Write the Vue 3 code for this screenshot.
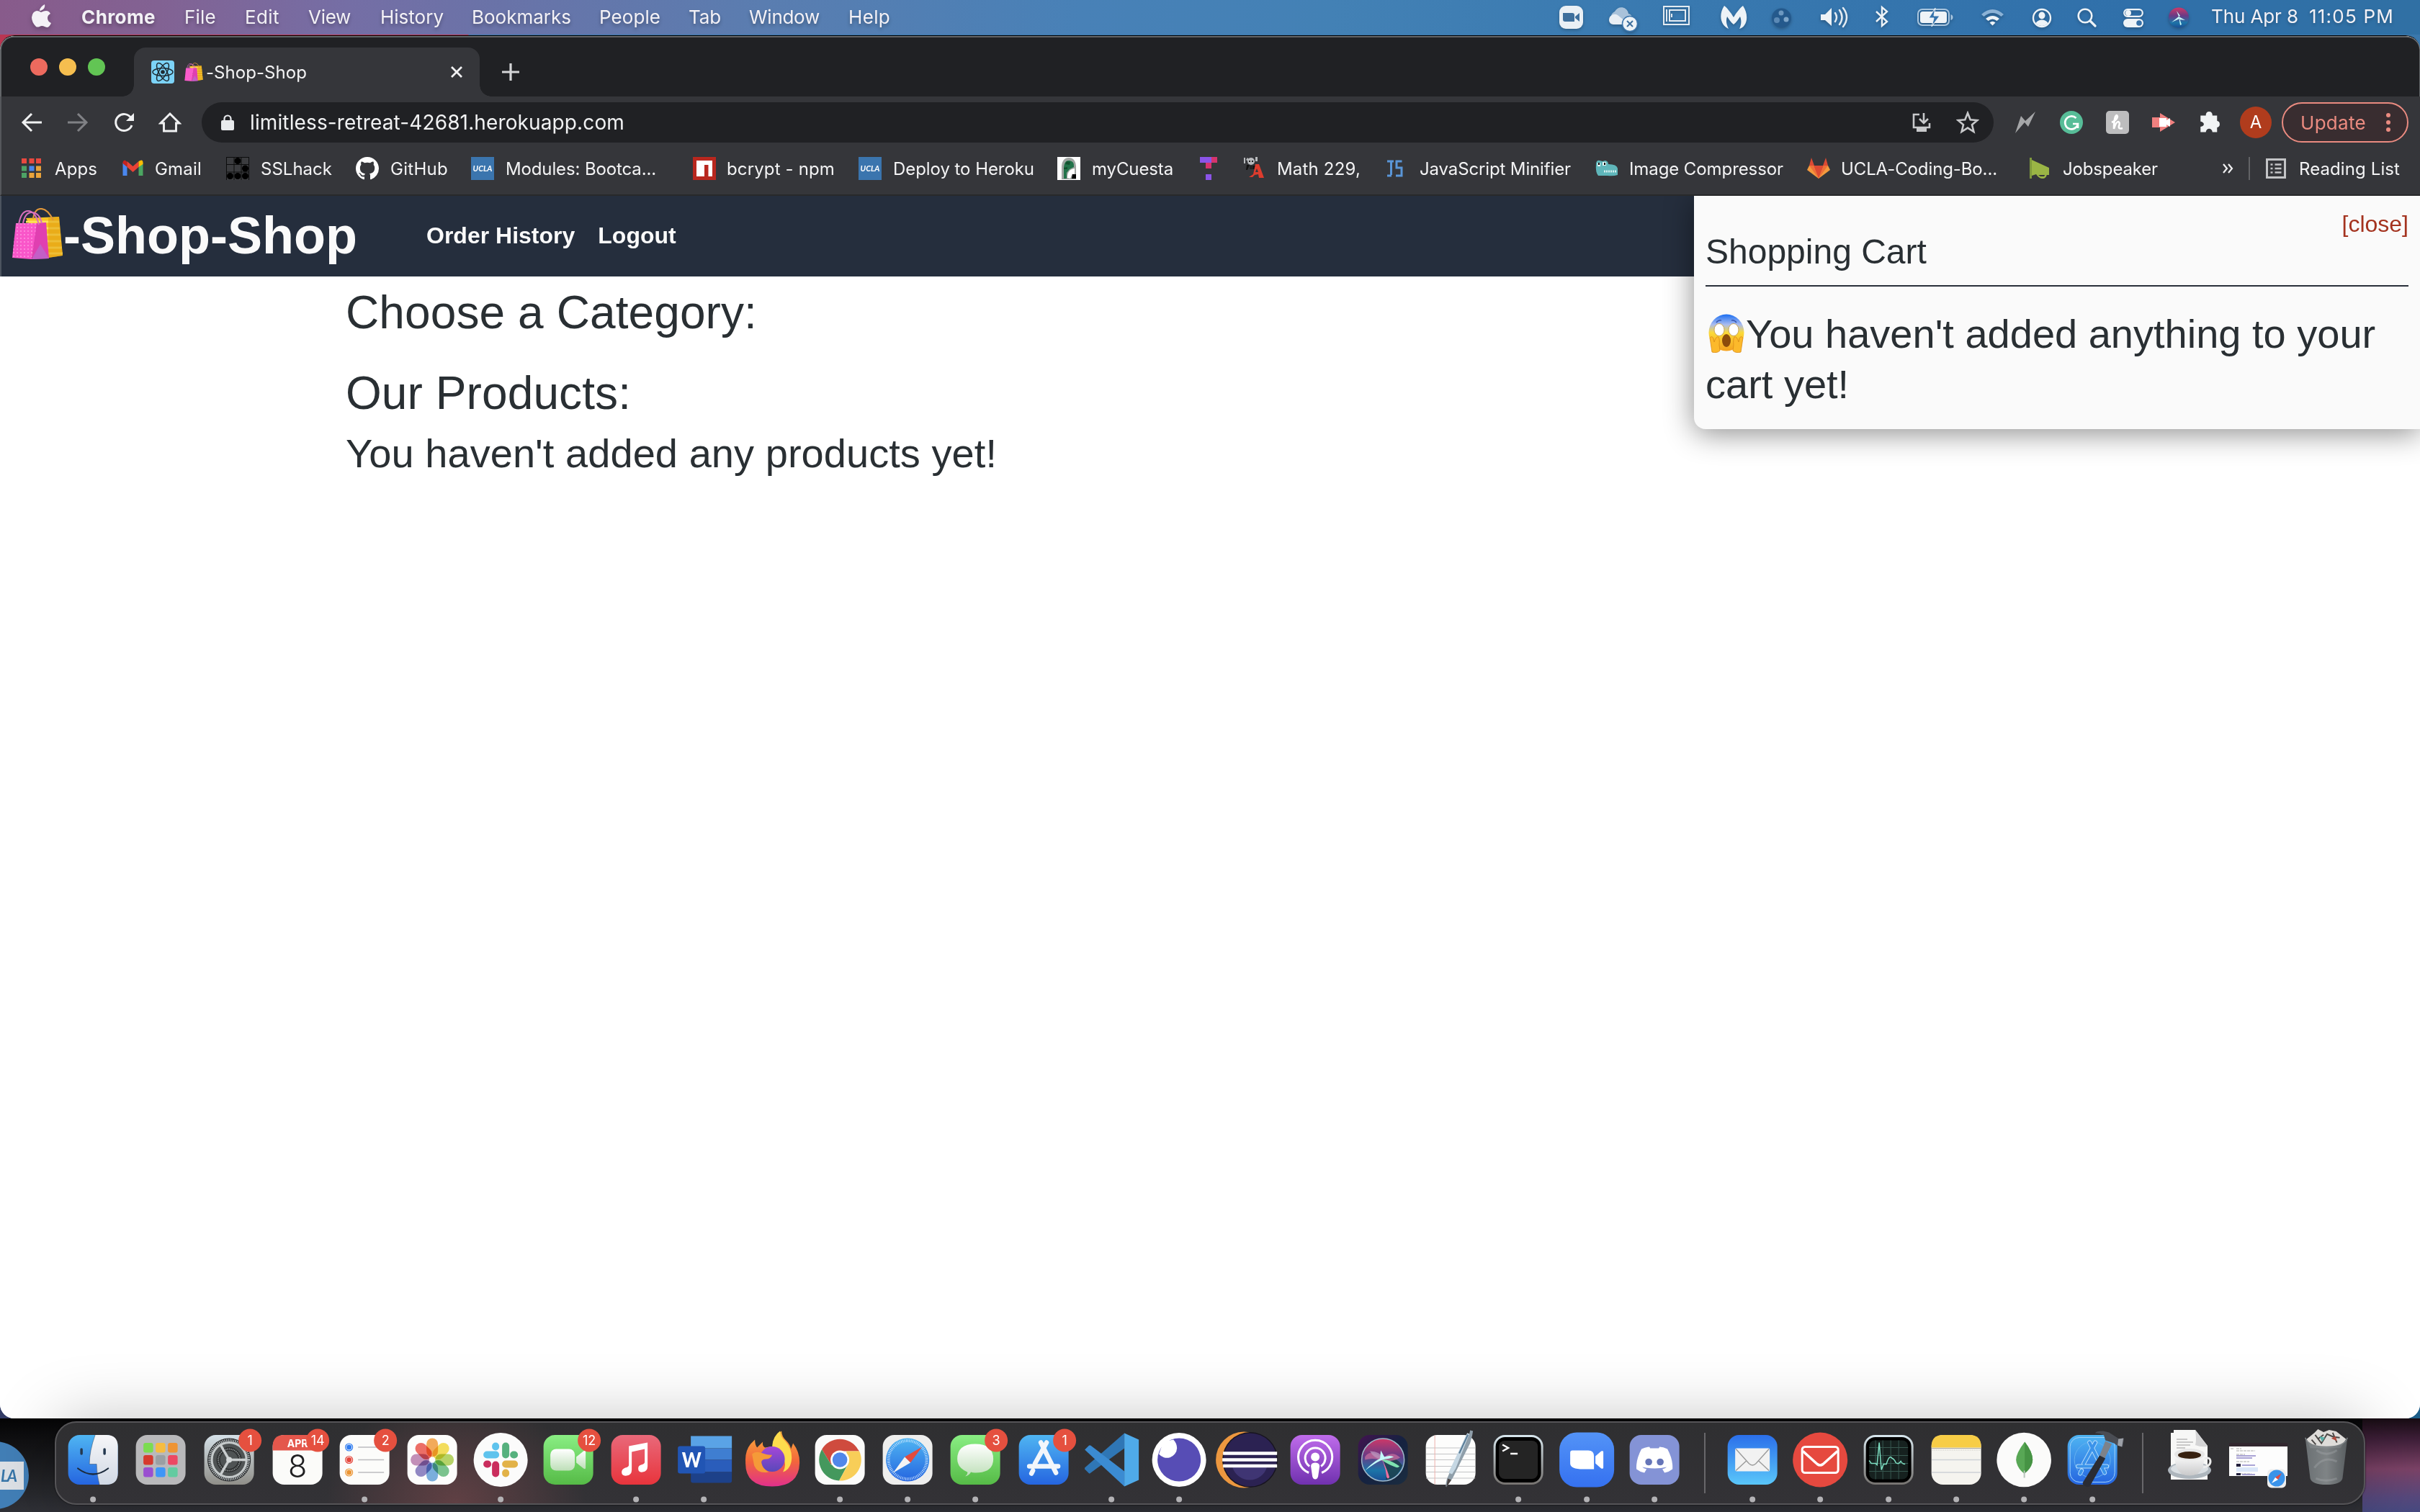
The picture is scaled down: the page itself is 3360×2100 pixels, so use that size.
<script setup>
// Spreads a label over a given width, in pixels, by adjusting its tracking.
const vFit = {
  mounted(el, { value }) {
    const natural = el.getBoundingClientRect().width
    el.style.letterSpacing = (value - natural) / el.textContent.length + 'px'
  }
}

const menus = [
  { label: 'Chrome', text: 103, cell: 143, strong: true },
  { label: 'File', text: 44, cell: 84 },
  { label: 'Edit', text: 48, cell: 88 },
  { label: 'View', text: 59, cell: 100 },
  { label: 'History', text: 88, cell: 127 },
  { label: 'Bookmarks', text: 138, cell: 177 },
  { label: 'People', text: 85, cell: 124 },
  { label: 'Tab', text: 45, cell: 84 },
  { label: 'Window', text: 98, cell: 138 },
  { label: 'Help', text: 58, cell: 98 }
]

const ucla = '<rect width="32" height="32" fill="#3b75ae"/><text x="16" y="20" text-anchor="middle" font-family="Lato,sans-serif" font-weight="700" font-size="11" fill="#fff" textLength="27" font-style="italic">UCLA</text>'

const statusIcons = [
  { w: 34, gap: 35, art: '<rect x="0" y="0" width="33" height="32" rx="9" fill="#eaf0f5"/><path d="M5 10h13a3 3 0 0 1 3 3v9H8a3 3 0 0 1-3-3zM22 15l6-5v12l-6-5z" fill="#3e6f9c"/>' },
  { w: 42, gap: 33, art: '<path d="M10 25a9 9 0 0 1-2-17 10 10 0 0 1 19 3 8 8 0 0 1 3 14z" fill="#a9c2da"/><path d="M0 20a8 8 0 0 1 12-7l10 8-3 5H6a6 6 0 0 1-6-6z" fill="#e8eef4"/><circle cx="29" cy="25" r="10.500" fill="#eef3f7" stroke="#3c76ad" stroke-width="1.500"/><path d="M25 21l8 8m0-8l-8 8" stroke="#3d6f9e" stroke-width="2"/>' },
  { w: 37, gap: 42, art: '<path d="M1 1h35v25H1z" fill="none" stroke="#e3ebf2" stroke-width="2"/><path d="M9 6h22v15H9zM5 5v17M12 11v5" fill="none" stroke="#e3ebf2" stroke-width="2"/>' },
  { w: 38, gap: 34, art: '<path d="M6 0c3 2 9 9 13 16C23 9 29 2 32 0c6 9 7 20 2 27-2 3-4 4-7 5 3-6 3-12 1-17-2 3-5 8-9 11-4-3-7-8-9-11-2 6-1 11 2 17C2 28-3 14 6 0z" fill="#eef3f7"/>' },
  { w: 27, gap: 41, art: '<circle cx="13.500" cy="17" r="13.500" fill="#24598c"/><circle cx="13" cy="10" r="3.500" fill="#6c97bf"/><circle cx="7" cy="20" r="4" fill="#5b89b5"/><circle cx="20" cy="19" r="3.500" fill="#7da5c9"/>' },
  { w: 38, gap: 38, art: '<path d="M0 12h6l9-9v25l-9-8H0z" fill="#eef3f7"/><path d="M20 10q4 6 0 12M26 6q7 10 0 20M31 3q10 13 0 26" stroke="#e4ecf3" stroke-width="2.500" fill="none" stroke-linecap="round"/>' },
  { w: 18, gap: 40, art: '<path d="M1 8l15 14-7 6V2l7 6L1 22" fill="none" stroke="#eef3f7" stroke-width="2.400"/>' },
  { w: 50, gap: 38, art: '<rect x="1" y="5" width="43" height="22" rx="6" fill="none" stroke="#a9c6df" stroke-width="2"/><rect x="4" y="8" width="37" height="16" rx="3.500" fill="#eef3f7"/><path d="M46.500 12v8q3-1 3-4t-3-4z" fill="#a9c6df"/><path d="M25 3L16 17h7l-3 12 11-15h-8z" fill="#3573ac" stroke="#eef3f7" stroke-width="1"/>' },
  { w: 33, gap: 38, art: '<path d="M1 12q15.500-14 31 0l-3.500 3q-12-10-24 0z" fill="#8bb2d6"/><path d="M7 18q9.500-8 19 0l-3.500 3q-6-5-12 0z" fill="#eef3f7"/><path d="M12.500 23.500q4-3.500 8 0l-4 4z" fill="#eef3f7"/>' },
  { w: 28, gap: 35, art: '<circle cx="14" cy="17" r="12" fill="none" stroke="#eef3f7" stroke-width="2.400"/><ellipse cx="14" cy="13.500" rx="4.500" ry="5" fill="#eef3f7"/><path d="M5.500 24q3-4.500 8.500-4.500t8.500 4.500q-3 4-8.500 4t-8.500-4z" fill="#eef3f7"/>' },
  { w: 27, gap: 37, art: '<circle cx="11" cy="14" r="9.300" fill="none" stroke="#eef3f7" stroke-width="2.600"/><path d="M18 21l7 7" stroke="#eef3f7" stroke-width="3.200" stroke-linecap="round"/>' },
  { w: 28, gap: 35, art: '<rect x="1.200" y="5.200" width="25.600" height="9.600" rx="4.800" fill="none" stroke="#eef3f7" stroke-width="2.200"/><circle cx="7" cy="10" r="4" fill="#eef3f7"/><rect y="18" width="28" height="12" rx="6" fill="#eef3f7"/><circle cx="22" cy="24" r="3.800" fill="#3570a8"/>' },
  { w: 28, gap: 31, art: '<circle cx="14" cy="16.500" r="14" fill="url(#siri)"/><g fill="#c9fbfa"><path d="M14 15L4 23l11-5zM14 15l9 5-8-1zM14 15l-3-8 5 7zM14 15l2 12 2-1z"/></g>' }
]

const bookmarks = [
  { cell: 139, pad: 16, text: 59, label: 'Apps', art: '<g fill="#e8493f"><path d="M2 2h7v7H2zM12.500 2h7v7h-7zM22 2h7v7h-7z"/></g><path d="M2 12.500h7v7H2zM2 22h7v7H2z" fill="#4da265"/><path d="M12.500 12.500h7v7h-7z" fill="#4a87ee"/><path d="M22 12.500h7v7h-7zM12.500 22h7v7h-7zM22 22h7v7h-7z" fill="#e9a33b"/>' },
  { cell: 147, pad: 16, text: 65, label: 'Gmail', art: '<g transform="translate(1.500 0)"><path d="M2 8v18h6V13z" fill="#4a87ee"/><path d="M24 13v13h6V8z" fill="#4ba661"/><path d="M2 8q0-3 3-3.500L8 7v7L2 9z" fill="#c5221f"/><path d="M8 6l8 7 8-7v8l-8 7-8-7z" fill="#e94235"/><path d="M24 6q6-4 6 2v2l-6 4z" fill="#fbbc04"/></g>' },
  { cell: 180, pad: 16, text: 99, label: 'SSLhack', art: '<rect width="32" height="32" fill="#3b3c3f"/><path d="M0 .5h32M0 10.500h32M0 21h32M.5 0v32M11 0v32M21 0v32M31.500 0v32" stroke="#0c0c0d"/><circle cx="16" cy="5.500" r="4.500"/><circle cx="26.500" cy="16" r="4.500"/><circle cx="5.500" cy="26.500" r="4.500"/><circle cx="16" cy="26.500" r="4.500"/><circle cx="26.500" cy="26.500" r="4.500"/>' },
  { cell: 160, pad: 16, text: 80, label: 'GitHub', art: '<path transform="scale(2)" fill="#fff" d="M8 0C3.580 0 0 3.580 0 8c0 3.540 2.290 6.530 5.470 7.590.4.070.55-.17.55-.38 0-.19-.01-.82-.01-1.490-2.010.37-2.530-.49-2.690-.94-.09-.23-.48-.94-.82-1.130-.28-.15-.68-.52-.01-.53.63-.01 1.080.58 1.230.82.72 1.210 1.870.87 2.330.66.070-.52.28-.87.51-1.070-1.780-.2-3.640-.89-3.640-3.950 0-.87.31-1.590.82-2.150-.08-.2-.36-1.020.08-2.120 0 0 .67-.21 2.200.82.64-.18 1.320-.27 2-.27s1.360.09 2 .27c1.530-1.040 2.200-.82 2.200-.82.44 1.100.16 1.920.08 2.120.51.56.82 1.270.82 2.150 0 3.070-1.870 3.750-3.650 3.950.29.25.54.73.54 1.480 0 1.070-.01 1.930-.01 2.200 0 .21.15.46.55.38A8.010 8.010 0 0 0 16 8c0-4.420-3.580-8-8-8z"/>' },
  { cell: 308, pad: 16, text: 209, label: 'Modules: Bootca...', art: ucla },
  { cell: 230, pad: 15, text: 150, label: 'bcrypt - npm', art: '<rect width="32" height="32" fill="#b8271e"/><path d="M5 5h22v22h-5.500V11H16v16H5z" fill="#fff"/>' },
  { cell: 276, pad: 16, text: 196, label: 'Deploy to Heroku', art: ucla },
  { cell: 194, pad: 16, text: 113, label: 'myCuesta', art: '<rect width="32" height="32" fill="#fff"/><path d="M6 31V13Q7 1 16 1t10 12v18z" fill="#a0a5a2"/><path d="M9 30V14q1-10 8-9 7 1 6 9l-6 3-4 5v8z" fill="#22734a"/><path d="M14 29q0-12 10-13v13h-3v-6l-3 7z" fill="#fff"/><path d="M21 24h5v6h-6z"/><path d="M13 6l5 1-1 4-6-1zM9 15l5-1v3H9z" fill="#14512f"/>' },
  { cell: 62, pad: 0, text: 0, label: '', art: '<path d="M4 0h16v8h-4v0H4z" fill="#8b54e8"/><path d="M20 0h8v8h-8zM12 8h8v8h-8z" fill="#d6346d"/><path d="M12 24h8v8h-8z" fill="#8b54e8"/>' },
  { cell: 198, pad: 17, text: 116, label: 'Math 229,', art: '<g fill="#b8babd"><path d="M3 1h2v8H3zM8 1l3 3-2 2-3-2zM19 0h3v6h-3z"/><circle cx="13" cy="6" r="5"/><path d="M7 11h4l-3 7H6zM15 12h4v5h-3z" fill="#111"/></g><path d="M10 5h2v2h-2zM14 5h2v2h-2zM11 12h5v5h-5z" fill="#222"/><path d="M19 10h5l7 19h-7l-1-5-5 1-3 3h-5l6-4zm2 6l-2 5h4z" fill="#dd3c2d"/>' },
  { cell: 293, pad: 17, text: 210, label: 'JavaScript Minifier', art: '<path d="M4 6h9M9.500 6v19M4 26h6M24.500 6H17v9h7v11h-8" fill="none" stroke="#5a96d8" stroke-width="3"/>' },
  { cell: 294, pad: 15, text: 214, label: 'Image Compressor', art: '<path d="M1 9q1-5 5-4l4 1 4-1q4 1 4 5 12 0 13 6v9q-6 2-14 1H4q-4-4-3-17z" fill="#5fb6ba"/><path d="M3 8h4v5H3zM10 7h5v5h-5z" fill="#e8f6f6"/><path d="M4 8h2v3H4zM12 8h2v3h-2z"/><path d="M12 20h18" stroke="#d5eeee" stroke-width="3" stroke-dasharray="2 1"/>' },
  { cell: 307, pad: 15, text: 217, label: 'UCLA-Coding-Bo...', art: '<path d="M16 30L0 18l3-6h26l3 6z" fill="#f39a3e"/><path d="M16 30L9 12h14z" fill="#dc4a33"/><path d="M16 30L3 12h6zM16 30l13-18h-6z" fill="#ee7038"/><path d="M6 1l4 11H3zM26 1l3 11h-7z" fill="#dc4a33"/>' },
  { cell: 246, pad: 16, text: 132, label: 'Jobspeaker', art: '<path d="M2 1h3v29H2z" fill="#7f9a3c"/><path d="M5 4l24 11v10H14l3 2h5l2-3h2q-1 6-6 6t-9-6l-6 2z" fill="#9ab545"/>' }
]

const tile = (fill, extra = '') => `<rect x="-34.500" y="-34.500" width="69" height="69" rx="16" fill="${fill}" ${extra}/>`
const rot = (n, fn) => Array.from({ length: n }, (_, i) => fn((i * 360) / n, i)).join('')
const aShape = (w, c) => `<g stroke="${c}" stroke-width="${w}" stroke-linecap="round" fill="none"><path d="M4-24L-12 5M-4-24L17 18M-20 9H20M-15 15l-2 4"/></g>`

const petals = ['#f19a37', '#f3d83b', '#a8cc48', '#5fb878', '#5f9fd8', '#7a6fb9', '#b779ab', '#ea4f45']
const pads = ['#7bdc50', '#f6bc40', '#ee9434', '#d63a2e', '#9a9fa3', '#ec4863', '#9a4fd0', '#3f96f7', '#63cba0']

const mainApps = [
  { dot: true, art: tile('url(#blue)') + '<path d="M3-34.500Q-5-12-5 6H5q0 14 4 28.500h9.500q16 0 16-16v-37q0-16-16-16z" fill="url(#pale)"/><path d="M-16-14.500v6M16-14.500v6" stroke="#24384f" stroke-width="3.500" stroke-linecap="round"/><path d="M3-34.500Q-5-12-5 6H5q0 14 4 28.500" fill="none" stroke="#1d2c3e" stroke-width=".8" opacity=".5"/><path d="M-21 12Q0 28 21 12" fill="none" stroke="#1d2c3e" stroke-width="2.200" stroke-linecap="round"/>' },
  { art: tile('#b9b9bb') + pads.map((c, i) => `<rect x="${-24 + (i % 3) * 17}" y="${-23.5 + Math.floor(i / 3) * 17}" width="13.500" height="13.500" rx="3" fill="${c}"/>`).join('') },
  { badge: '1', art: tile('url(#steel)') + '<circle r="30" fill="#242628"/><circle r="27" fill="none" stroke="#aeb4b6" stroke-width="4" stroke-dasharray="1.400 1.100"/><circle r="24" fill="#4f5354"/><circle r="24" fill="none" stroke="#c5cacb" stroke-width="3"/><circle r="15" fill="none" stroke="#2b2d2e" stroke-width="5"/><circle r="15" fill="none" stroke="#8b9091" stroke-width="2" stroke-dasharray="1.400 1.100"/>' + rot(3, a => `<path d="M0 0H24" stroke="#c9cdce" stroke-width="3.500" transform="rotate(${a})"/>`) + '<circle r="4" fill="#d4d8d9"/>' },
  { badge: '14', art: '<g transform="translate(1 0)">' + tile('#fbfbf9') + '<path d="M-34.500-13v-5.500q0-16 16-16h37q16 0 16 16v5.500z" fill="#e4574c"/><text x="0" y="-17.500" text-anchor="middle" font-family="Inter,sans-serif" font-size="14" font-weight="700" fill="#fff">APR</text><text x="0" y="24" text-anchor="middle" font-family="Inter,sans-serif" font-size="43" font-weight="300" fill="#1f1f21">8</text></g>' },
  { dot: true, badge: '2', art: tile('#fcfcfa') + [['#2f7cf0', -17.5], ['#e5483d', 0], ['#eb9534', 17.5]].map(([c, y]) => `<circle cx="-21.500" cy="${y}" r="5" fill="none" stroke="${c}" stroke-width="1.200"/><circle cx="-21.500" cy="${y}" r="3.500" fill="${c}"/><path d="M-9 ${y}H27" stroke="#bdbdbf" stroke-width="1.300"/>`).join('') },
  { art: tile('#fdfdfc') + rot(8, (a, i) => `<rect x="-8" y="-30" width="16" height="26" rx="8" fill="${petals[i]}" fill-opacity=".82" transform="rotate(${a})" style="mix-blend-mode:multiply"/>`) },
  { dot: true, art: '<circle r="37.500" fill="#fbfbfb"/><g stroke-width="10" stroke-linecap="round"><path d="M-19-7h12M-7-19v1" stroke="#5fc3ed"/><path d="M7-19v12M19-7h-1" stroke="#56b17e"/><path d="M19 6H7M7 18v1" stroke="#e2b248"/><path d="M-7 19V7M-19 6h1" stroke="#ca2d5d"/></g>' },
  { badge: '12', art: tile('url(#green)') + '<rect x="-25" y="-15" width="34" height="30" rx="8" fill="url(#camera)"/><path d="M11-4l10-8q3-2 3 1v22q0 3-3 1L11 4z" fill="url(#camera)"/>' },
  { dot: true, art: tile('url(#red)') + '<path d="M-10-19l26-5v33q0 7-7 8-6 1-6-5 0-4 4-5 5-1 5-4v-18l-18 4v25q0 7-7 8-7 1-7-5 0-4 5-6 5-1 5-4z" fill="#fff"/>' },
  { dot: true, art: '<path d="M-18-33h57v17h-57z" fill="#5aa3e6"/><path d="M-18-16h57V0h-57z" fill="#3f7ed1"/><path d="M-18 0h57v17h-57z" fill="#2a5dbb"/><path d="M-18 17h57v12q0 3-3 3h-51q-3 0-3-3z" fill="#1d4189"/><rect x="-36" y="-19" width="38" height="38" rx="3" fill="#2155b4"/><text x="-17" y="10" text-anchor="middle" font-family="Lato,sans-serif" font-size="29" font-weight="900" fill="#fff" textLength="27" lengthAdjust="spacingAndGlyphs">W</text>' },
  { art: '<path d="M2-19Q1-33 13-40q0 8 7 14 5 5 6 11l3-8q9 12 9 26 0 34-38 34T-37 3q-1-15 7-25l6-6q0 7 3 11l8-8q-1 6 3 8z" fill="url(#fox)"/><path d="M0-19Q1-33 11-40q0 8 7 14 10 11 9 25-1 14-12 18Q25 0 0-19z" fill="#fedc4d"/><circle cy="-1" r="17.500" fill="url(#violet)"/><path d="M-28-8q5-5 15-1 9 3 13 2-2 6-9 6-5 0-6 4 1 9 10 14-15 3-20-9z" fill="#f59a38"/>' },
  { dot: true, art: tile('#fbfbfa') + '<path d="M-25-14.500A29 29 0 0 1 25-14.500L27-12H0L-12 7z" fill="#cf4b3e"/><path d="M-25-14.500A29 29 0 0 0-1 29L11 6.500-12 7z" fill="#44985d"/><path d="M27-12A29 29 0 0 1-1 29L11 7 9-12z" fill="#f8ce58"/><circle r="13" fill="#fff"/><circle r="10.300" fill="#5187ea"/>' },
  { dot: true, art: tile('#eeeeed') + '<circle r="30" fill="url(#blue)"/><circle r="26.500" fill="none" stroke="#d7ebff" stroke-width="4" stroke-dasharray=".8 1.500"/><path d="M20-18L4 4-4-4z" fill="#e34b3f"/><path d="M-20 18L-4-4 4 4z" fill="#f4f4f4"/>' },
  { dot: true, badge: '3', art: tile('url(#green)') + '<path d="M-14 23q4-3 3-6-14-6-14-18 0-21 25-21T25-1q0 19-25 19-4 0-6-1-3 5-8 6z" fill="url(#camera)"/>' },
  { badge: '1', art: tile('url(#blue)') + aShape(6.5, '#f2f6fb') },
  { dot: true, art: '<path d="M18-37v21l-48 35-1 0-6-6v-2z" fill="#2f76b5"/><path d="M-37-14l6-6h2L18 16v21z" fill="#3b8bd2"/><path d="M18-37l20 9v56l-20 9z" fill="#4faae9"/>' },
  { dot: true, art: '<circle r="37.500" fill="#fff"/><circle r="30" fill="#574db5"/><path d="M-28-8A14 14 0 0 0-3-16q0-7-5-12l-14 3z" fill="#fff"/>' },
  { art: '<circle cx="-4" r="39" fill="#ec973f"/><circle cx="4.500" r="38.500" fill="#171420"/><circle cx="4.500" r="37" fill="#2b2252"/><path d="M-20 10a25 25 0 0 0 48 0z" fill="#3f3573"/><path d="M-33-9h75M-34 0h76M-33 8.500h75" stroke="#fff" stroke-width="4.300"/>' },
  { art: tile('url(#purple)') + '<g fill="none" stroke="#fff" stroke-width="3"><path d="M-9 18A23.500 23.500 0 1 1 9 18"/><path d="M-8 9A14 14 0 1 1 8 9"/></g><circle cy="-4" r="6" fill="#fff"/><path d="M-6 9q0-5 6-5t6 5l-2 14q-1 4-4 4t-4-4z" fill="#fff"/>' },
  { art: tile('url(#night)') + '<circle r="29.500" fill="url(#siri)"/><path d="M0 0Q16-8 27 8 20 26 4 28 6 10 0 0z" fill="#1d3d45" opacity=".8"/><circle r="29.500" fill="none" stroke="#9fb9c9" stroke-width="1.500"/><path d="M-25-4Q-18-16 0-2q12-12 24-1-10 6-24 5-12-6-25-2z" fill="#cf6f9e" opacity=".7"/><path d="M-18-12Q-4-12 0-2-12 0-18-12z" fill="#b994bb" opacity=".8"/><path d="M-2-1Q4 8 9 24q-2 4-4 0Q4 10-2-1z" fill="#ec6f9f"/><path d="M-2 0q10-2 25 9-2 3-6 1Q6 6-2 0z" fill="#7ee3b0"/><path d="M-25 15Q-14 3-4-2l1-11 5 9q8-3 13 0-7 3-12 3-8 1-28 16z" fill="#c4fbfa"/>' },
  { art: tile('#fdfdfc') + '<path d="M-34-16.500h68M-34-8h68M-34 0h68M-34 9h68M-34 17h68M-34 25.500h68" stroke="#c3c4c6"/><path d="M-22-34v68" stroke="#eeb0ab"/><path d="M23-37l3 1 1-5 4 1-1 6-3 11L3 25l-9 13q-2-1 1-12z" fill="#8f9ea9"/><path d="M23-37l3 1L7 12l-5 8-5-2z" fill="#c5d7e3"/><path d="M24-35L12-9" stroke="#587b96" stroke-width="2"/><path d="M-4 26l5 2-7 10z" fill="#4b4444"/>' },
  { dot: true, art: tile('url(#frame)') + '<rect x="-31.500" y="-31.500" width="63" height="63" rx="13"/><rect x="-27" y="-26.500" width="54" height="53" rx="8" fill="#242424"/><path d="M-22-21l8 4.500-8 4.500M-11-8.500h10" stroke="#fff" stroke-width="2.400" fill="none"/>' },
  { dot: true, art: '<rect x="-38" y="-38" width="76" height="76" rx="24" fill="url(#zoomblue)"/><path d="M-20-13H2q8 0 8 8v18h-15q-18 0-18-8v-15q0-3 3-3zM12-5l8-7q3-1 3 1v22q0 2-3 1l-8-7z" fill="#fff"/>' },
  { dot: true, art: tile('#8493d6') + '<path d="M-18-15Q-12-18-7-18l1 2H6l1-2q5 0 11 3 8 15 7 28-5 4-11 5l-3-5q4-1 6-3Q1 14-17 10q2 2 6 3l-3 5q-6-1-11-5-1-13 7-28z" fill="#fff"/><circle cx="-8" cy="3" r="4.800" fill="#6575b8"/><circle cx="8" cy="3" r="4.800" fill="#6575b8"/>' }
]

const pinnedApps = [
  { dot: true, art: tile('url(#mailblue)') + '<rect x="-24" y="-16" width="48" height="32" rx="2" fill="#f2f2f2"/><path d="M-23 15L-8 1M23 15L8 1M-23-15L-5 5q5 5 10 0l18-20" fill="none" stroke="#9b9b9b" stroke-width="1.400"/>' },
  { dot: true, art: '<circle r="38" fill="#e6493f"/><rect x="-25" y="-18" width="50" height="36" rx="4" fill="none" stroke="#fff" stroke-width="3"/><path d="M-24-12L-4 6q4 3 8 0l20-18" fill="none" stroke="#fff" stroke-width="3.500"/>' },
  { dot: true, art: tile('url(#frame)') + '<rect x="-31.500" y="-31.500" width="63" height="63" rx="13"/><rect x="-27" y="-27" width="54" height="54" rx="8" fill="#16211f"/><path d="M-27-17h54M-27-6h54M-27 5h54M-27 16h54M-18-27v54M-8-27v54M3-27v54M14-27v54" stroke="#37574f"/><path d="M-27 1l3 4h6l2 2 3-31 3 38 3-8h4q4-14 8-8 3 1 5 6 4 3 7-2 2 4 6 4" fill="none" stroke="#7edfc2" stroke-width="1.500"/>' },
  { dot: true, art: tile('#f5f4ef') + '<path d="M-34.500-17v-1.500q0-16 16-16h37q16 0 16 16v1.500z" fill="#f7cd46"/><path d="M-34-16h68" stroke="#aaa79d"/><path d="M-33-13.500h66" stroke="#c0beb8" stroke-dasharray="1 1.500"/><path d="M-34 0h68M-34 17.500h68" stroke="#cdd1d6" stroke-width="1.500"/>' },
  { dot: true, art: '<circle r="37.800" fill="#fbfbfa"/><path d="M1-25Q-11-9-11 0q1 11 11 19Q12 11 12 0 12-11 1-25z" fill="#58a755"/><path d="M1-25v44q10-8 11-19Q12-11 1-25z" fill="#469344"/><path d="M-.5 15h2v10h-2z" fill="#b8c4bc"/>' },
  { dot: true, art: tile('url(#blue)') + '<rect x="-31" y="-31" width="62" height="62" rx="13" fill="none" stroke="#9fd2fb"/><circle r="25" fill="none" stroke="#65b0ef"/>' + aShape(6, '#b4dcfb') + aShape(4, '#3b93ea') + '<path d="M18-26l9 4L17-2l-7-4z" fill="#7d828a"/><path d="M10-6l8 4L-2 34q-2 5-7 3-6-3-4-6z" fill="#2a2c34"/><path d="M4-37q0-3 11-3l8 2 11 7 3 2 7-1-2 12-8-2-4-3-12-4-2-7q-5-3-12-3z" fill="#4a4d54"/><path d="M36-29l7-1-2 12-6-2z" fill="#9da1a8"/>' }
]
</script>

<template>
  <div class="desktop">
    <svg class="defs" width="0" height="0">
      <defs>
        <linearGradient id="blue" x2="0" y2="1"><stop stop-color="#4fb5f2" /><stop offset="1" stop-color="#2565e0" /></linearGradient>
        <linearGradient id="pale" x2="0" y2="1"><stop stop-color="#f6f6f8" /><stop offset="1" stop-color="#d1d9e5" /></linearGradient>
        <linearGradient id="steel" x2="0" y2="1"><stop stop-color="#d4e0e7" /><stop offset="1" stop-color="#908f89" /></linearGradient>
        <linearGradient id="green" x2="0" y2="1"><stop stop-color="#89ee83" /><stop offset="1" stop-color="#56bb47" /></linearGradient>
        <linearGradient id="camera" x2="0" y2="1"><stop stop-color="#fff" /><stop offset="1" stop-color="#bedfb8" /></linearGradient>
        <linearGradient id="red" x2="0" y2="1"><stop stop-color="#e9697a" /><stop offset="1" stop-color="#e8343c" /></linearGradient>
        <linearGradient id="fox" x2="0" y2="1"><stop stop-color="#fbb03b" /><stop offset=".55" stop-color="#f2663b" /><stop offset="1" stop-color="#e1308c" /></linearGradient>
        <linearGradient id="violet" x2="0" y2="1"><stop stop-color="#a547d8" /><stop offset="1" stop-color="#5a48ba" /></linearGradient>
        <linearGradient id="purple" x2="0" y2="1"><stop stop-color="#bf6ceb" /><stop offset="1" stop-color="#7031af" /></linearGradient>
        <linearGradient id="night" x2="1" y2="1"><stop stop-color="#421350" /><stop offset=".5" stop-color="#152240" /><stop offset="1" stop-color="#1b2d40" /></linearGradient>
        <linearGradient id="siri" x2="0" y2="1"><stop stop-color="#cf3868" /><stop offset=".4" stop-color="#6b3a85" /><stop offset=".75" stop-color="#1c74a8" /><stop offset="1" stop-color="#1b4f95" /></linearGradient>
        <linearGradient id="frame" x2="0" y2="1"><stop stop-color="#d8e7ee" /><stop offset="1" stop-color="#75726f" /></linearGradient>
        <linearGradient id="zoomblue" x2="0" y2="1"><stop stop-color="#5393f7" /><stop offset="1" stop-color="#3571f0" /></linearGradient>
        <linearGradient id="mailblue" x2="0" y2="1"><stop stop-color="#2b6fea" /><stop offset="1" stop-color="#5ac7fa" /></linearGradient>
        <linearGradient id="bin" x2="1" y2="0"><stop stop-color="#6f7578" /><stop offset=".5" stop-color="#858a8c" /><stop offset="1" stop-color="#5c6164" /></linearGradient>
        <linearGradient id="cup" x2="0" y2="1"><stop stop-color="#fafafa" /><stop offset="1" stop-color="#c9c9ca" /></linearGradient>
        <linearGradient id="scare" x2="0" y2="1"><stop stop-color="#1a6ef2" /><stop offset=".28" stop-color="#a9bbf0" /><stop offset=".5" stop-color="#fbd938" /><stop offset="1" stop-color="#f5a11f" /></linearGradient>
        <pattern id="dots" width="5" height="5" patternUnits="userSpaceOnUse"><circle cx="2" cy="2" r=".9" fill="#ff9be3" /></pattern>
        <symbol id="bags" viewBox="0 0 70 72">
          <path d="M19 14l46-2 5 54-20 3z" fill="#f7c325" />
          <path d="M19 19h46M20 28h46M21 37h46M22 46h46M23 55h46M24 63h46" stroke="#fde35b" stroke-width="3" />
          <path d="M50 14l15-2 5 54-20 3z" fill="#d9900c" opacity=".45" />
          <path d="M29 15Q31 1 40 1t17 16" fill="none" stroke="#e0973a" stroke-width="2.200" />
          <path d="M5 21h30L27 71 0 69z" fill="#f956c9" /><path d="M5 21h30L27 71 0 69z" fill="url(#dots)" />
          <path d="M34 21l13-1 4 50-24 1z" fill="#e03fb1" /><path d="M39 50l12 20-24 1z" fill="#c35fc6" />
          <path d="M9 23Q12 4 22 4t15 19M15 21Q18 5 28 6t13 15" fill="none" stroke="#da70bd" stroke-width="2" />
        </symbol>
      </defs>
    </svg>

    <header class="menubar">
      <svg class="apple" viewBox="0 0 27 32"><path d="M18 0q1 4-2 7-3 2-5 2 0-5 7-9zM7 9q3 0 6 2 4-2 7-2 4 0 6 4-4 2-4 6 0 5 5 7-2 5-5 6-2 0-4-1-4-2-7 0-3 1-5 0-6-6-6-13 1-8 7-9z" fill="#f4f1f6" /></svg>
      <nav class="menus">
        <div v-for="m in menus" :key="m.label" :style="{ width: m.cell + 'px' }">
          <span v-fit="m.text" :class="{ strong: m.strong }">{{ m.label }}</span>
        </div>
      </nav>
      <div class="status">
        <svg v-for="(s, i) in statusIcons" :key="i" :width="s.w" height="38" :viewBox="`0 -1 ${s.w} 38`" :style="{ marginRight: s.gap + 'px' }" v-html="s.art"></svg>
        <span v-fit="121" class="date">Thu Apr 8</span>
        <span v-fit="118" class="time">11:05 PM</span>
      </div>
    </header>

    <main class="window">
      <div class="tabs">
        <div class="lights"><i class="red"></i><i class="yellow"></i><i class="green"></i></div>
        <div class="tab">
          <svg class="react" viewBox="0 0 32 32"><rect width="32" height="32" rx="4" fill="#7cd3f7" /><g fill="none" stroke="#1e2a31" stroke-width="1.500"><ellipse cx="16" cy="16" rx="14" ry="5.400" /><ellipse cx="16" cy="16" rx="14" ry="5.400" transform="rotate(60 16 16)" /><ellipse cx="16" cy="16" rx="14" ry="5.400" transform="rotate(120 16 16)" /></g><circle cx="16" cy="16" r="2.800" fill="#1e2a31" /></svg>
          <svg class="mini"><use href="#bags" /></svg>
          <span v-fit="140">-Shop-Shop</span>
          <svg class="x" viewBox="0 0 18 18"><path d="M2 2l14 14M16 2L2 16" stroke="#f2f2f3" stroke-width="2.800" /></svg>
        </div>
        <svg class="plus" viewBox="0 0 26 26"><path d="M13 1v24M1 13h24" stroke="#d4d5d7" stroke-width="3.200" /></svg>
      </div>

      <div class="toolbar">
        <div class="nav">
          <svg viewBox="0 0 32 32"><path d="M30 16H5M16 4L4 16l12 12" fill="none" stroke="#f0f1f2" stroke-width="3" /></svg>
          <svg viewBox="0 0 32 32"><path d="M2 16h25M16 4l12 12-12 12" fill="none" stroke="#808185" stroke-width="3" /></svg>
          <svg viewBox="0 0 32 32"><path d="M27 20a11.500 11.500 0 1 1-1-10" fill="none" stroke="#f0f1f2" stroke-width="3" /><path d="M30 3v11H19z" fill="#f0f1f2" /></svg>
          <svg viewBox="0 0 32 32"><path d="M3 17L16 4l13 13h-4.500v11h-17V17z" fill="none" stroke="#f0f1f2" stroke-width="2.900" /></svg>
        </div>
        <div class="omnibox">
          <svg class="lock" viewBox="0 0 18 22"><rect y="8" width="18" height="14" rx="2" fill="#e8eaed" /><path d="M4.500 9V6a4.500 4.500 0 0 1 9 0v3" fill="none" stroke="#e8eaed" stroke-width="2.200" /></svg>
          <span v-fit="520">limitless-retreat-42681.herokuapp.com</span>
          <svg class="install" viewBox="0 0 28 28"><path d="M11 3H3v18h22v-6" fill="none" stroke="#c8c9cb" stroke-width="2.600" /><path d="M7 22h14v5H7z" fill="#c8c9cb" /><path d="M17 1v14m-6-6l6 6 6-6" fill="none" stroke="#c8c9cb" stroke-width="2.600" /></svg>
          <svg class="star" viewBox="0 0 32 32"><path d="M16 3l3.700 9.300 9.800.7-7.500 6.300 2.400 9.700L16 23.600 7.600 29 10 19.300 2.500 13l9.800-.7z" fill="none" stroke="#c8c9cb" stroke-width="2.600" /></svg>
        </div>
        <div class="extensions">
          <svg viewBox="0 0 32 32"><path d="M30 1L20 22l-5-6L2 31 10 7l6 7z" fill="#a5a6a8" /></svg>
          <svg viewBox="0 0 32 32"><circle cx="16" cy="16" r="16" fill="#57bd98" /><path d="M22.500 10a9 9 0 1 0 2.500 8h-7m7 0v6" fill="none" stroke="#fff" stroke-width="2.600" /></svg>
          <svg viewBox="0 0 32 32"><rect width="32" height="32" rx="5" fill="#bdbdbe" /><path d="M8 16q7-3 8-8-1-4-3 0-2 6-2 17 3-10 6-10 3 1 1 6-1 5 5 3" fill="none" stroke="#fff" stroke-width="2.600" /></svg>
          <svg viewBox="0 0 32 32"><path d="M0 9h11V3l21 13-21 13v-6H0z" fill="#f0807f" /><path d="M10 10h10v3l5-3v12l-5-3v3H10z" fill="#fff" /></svg>
          <svg viewBox="0 0 32 32"><path d="M3 7h8q0-6 5-6t5 6h7v8q4 1 4 5t-4 5v7h-7q-1-5-5-5t-5 5H3v-8q5-1 5-4t-5-4z" fill="#f1f3f4" transform="translate(.5 0) scale(.92)" /></svg>
        </div>
        <div class="avatar">A</div>
        <div class="update"><span v-fit="91">Update</span><i></i></div>
      </div>

      <div class="bookmarks">
        <div v-for="(b, i) in bookmarks" :key="i" class="bookmark" :style="{ width: b.cell + 'px' }">
          <svg viewBox="0 0 32 32" v-html="b.art"></svg>
          <span v-if="b.label" v-fit="b.text" :style="{ marginLeft: b.pad + 'px' }">{{ b.label }}</span>
        </div>
        <svg class="more" viewBox="0 0 16 14"><path d="M2 1l5 6-5 6M9 1l5 6-5 6" fill="none" stroke="#f0f0f1" stroke-width="2.200" /></svg>
        <div class="rule"></div>
        <svg class="list" viewBox="0 0 30 30"><path d="M2.500 2.500h25v25h-25z" fill="none" stroke="#c3c4c6" stroke-width="3" /><path d="M7.500 9.500h3m3 0h9M7.500 15h3m3 0h9M7.500 20.500h3m3 0h9" stroke="#c3c4c6" stroke-width="2.500" /></svg>
        <span v-fit="140">Reading List</span>
      </div>

      <section class="page">
        <header class="site-header">
          <h1><svg><use href="#bags" /></svg><span>-Shop-Shop</span></h1>
          <a class="orders">Order History</a>
          <a>Logout</a>
        </header>
        <div class="content">
          <h2 v-fit="571">Choose a Category:</h2>
          <h2 v-fit="396" class="products">Our Products:</h2>
          <h3 v-fit="904">You haven't added any products yet!</h3>
        </div>
        <aside class="cart">
          <div class="close">[close]</div>
          <h2>Shopping Cart</h2>
          <h3>
            <svg viewBox="0 0 52 54"><ellipse cx="26" cy="26" rx="24.500" ry="25.500" fill="url(#scare)" /><path d="M12 12q3-4 7-3M40 12q-3-4-7-3" stroke="#3a57b0" stroke-width="1.500" fill="none" /><ellipse cx="16" cy="22" rx="7" ry="8.500" fill="#fff" stroke="#c9a55a" /><ellipse cx="36" cy="22" rx="7" ry="8.500" fill="#fff" stroke="#c9a55a" /><ellipse cx="26" cy="37" rx="6" ry="9" fill="#8c4b0b" /><g fill="#fcb92b" stroke="#d98a15" stroke-width=".8"><path d="M3 33q3-3 5 1l1 5q3-9 6-7 2 3 1 11l1 8q-4 4-11 2z" /><path d="M49 33q-3-3-5 1l-1 5q-3-9-6-7-2 3-1 11l-1 8q4 4 11 2z" /></g></svg><span>You haven't added anything to your</span><br />cart yet!
          </h3>
        </aside>
      </section>
    </main>

    <footer class="shelf">
      <div class="behind">
        <div class="sticker"><span>LA</span></div>
        <div class="wallpaper"></div>
      </div>
      <div class="dock">
        <div v-for="(group, g) in [mainApps, pinnedApps]" :key="g" :class="['group', 'group-' + g]">
          <svg v-for="(a, i) in group" :key="i" viewBox="-47 -51.500 94 112">
            <g v-html="a.art"></g>
            <circle v-if="a.dot" cy="55" r="4" fill="#b3b2b5" />
            <g v-if="a.badge">
              <circle cx="29" cy="-27" r="16" fill="#e5503f" />
              <text x="29" y="-20.500" text-anchor="middle" font-family="Inter, sans-serif" font-size="18" fill="#fff">{{ a.badge }}</text>
            </g>
          </svg>
        </div>
        <div class="extras">
          <svg class="doc" viewBox="0 0 62 74"><path d="M4 5h4V1h30l17 22v47H4z" fill="#f7f7f6" /><path d="M38 1q2 15 0 21 7 3 17 2z" fill="#d4d4d5" /><path d="M12 14h15M12 18h23M12 22h19M12 26h12" stroke="#9b9b9b" /><ellipse cx="30" cy="57" rx="30" ry="12" fill="#aeb6bd" /><ellipse cx="30" cy="55" rx="26" ry="8" fill="#dadfe3" /><path d="M9 37h42q-1 19-10 25-11 5-22 0Q10 56 9 37z" fill="url(#cup)" /><path d="M51 41q8-3 8 4 0 6-10 8" fill="none" stroke="#ececec" stroke-width="3" /><ellipse cx="30" cy="35" rx="21" ry="8" fill="#e6e6e6" /><ellipse cx="30" cy="36" rx="16" ry="5" fill="#36200f" /></svg>
          <svg class="shot" viewBox="0 0 82 64"><path d="M0 0h81v46H0z" fill="#fdfdfd" /><path d="M0 0h81v5H0z" fill="#32272f" /><path d="M2 8h5m3 0h7M10 11h26M10 16h12M10 26h18M10 43h21" stroke="#aaa" stroke-dasharray="4 1" /><path d="M10 18h27M10 21h22M18 31h18M18 44h18" stroke="#8f86c8" stroke-width="1.400" /><path d="M10 34h30v6H10z" fill="#dbe7f9" /><path d="M10 29h6v4h-6zM10 42h6v3h-6z" fill="#22203c" /><rect x="53" y="36.500" width="26" height="26" rx="6" fill="#eee" /><circle cx="66" cy="49" r="11.500" fill="#3a93ea" /><path d="M73 42l-5 9-4-3z" fill="#e14a40" /><path d="M59 56l5-8 4 3z" fill="#fff" /></svg>
          <svg class="trash" viewBox="0 0 62 82"><path d="M3 14L14 5l5-5 8 4 8-3 10 2 14 11-8 13H8z" fill="#dedcd9" /><path d="M15 8l9 12 8-13 9 4 9 1M20 13l7-5M40 5l6 14M10 15l6 7" stroke="#4b4846" stroke-width="2" fill="none" /><path d="M21 10l8 2-4 6z" fill="#5ab0a8" /><path d="M38 13l6-3 2 7z" fill="#b14b3d" /><path d="M1 12q4 13 30 13t30-13l-7 58q-2 9-23 9T8 70z" fill="url(#bin)" opacity=".93" /><path d="M17 30q14 10 29 0M14 55q13-18 32-9M16 70q14 6 30 0" stroke="#aeb3b5" stroke-width="3" opacity=".3" fill="none" /><path d="M1 12q4 13 30 13t30-13" fill="none" stroke="#7e8386" stroke-width="1.500" /></svg>
        </div>
      </div>
    </footer>
  </div>
</template>

<style>
body { margin: 0; overflow: hidden; }
</style>

<style scoped>
* { box-sizing: border-box; }
.desktop { width: 3360px; height: 2100px; display: flex; flex-direction: column; overflow: hidden; background: linear-gradient(90deg, #333c66 0 100px, #1d5f8a 3000px) 0 1900px no-repeat, linear-gradient(90deg, #b93652 0 650px, #3a78ad 651px); font-family: Inter, "Liberation Sans", sans-serif; }
.defs { position: absolute; }
svg { display: block; flex: none; }
span { white-space: nowrap; }

.menubar { height: 48px; flex: none; display: flex; background: linear-gradient(90deg, #885b8b 0, #826293 220px, #756ea5 480px, #6973a8 700px, #5a7db0 1060px, #4881b7 1500px, #4381b5 1850px, #3b7bb1 2200px, #3070aa 2950px, #3070a4 3360px); color: #f3f1f6; font-size: 26px; line-height: 47px; }
.apple { width: 27px; height: 32px; margin: 6px 42px 0 44px; filter: drop-shadow(0 3px 3px rgba(0, 0, 0, .25)); }
.menus { display: flex; text-shadow: 0 3px 5px rgba(0, 0, 0, .3); }
.menus span { display: inline-block; }
.strong { font-weight: 700; }
.status { display: flex; margin-left: 889px; align-items: flex-start; }
.status svg { margin-top: 7px; filter: drop-shadow(0 2px 2px rgba(0, 0, 0, .25)); }
.status span { line-height: 46px; text-shadow: 0 2px 4px rgba(0, 0, 0, .25); }
.time { margin-left: 15px; }

.window { position: relative; height: 1921px; margin-top: 1px; flex: none; display: flex; flex-direction: column; border-radius: 20px; overflow: hidden; background: #fff; border-top: 1px solid #000; }
.tabs { height: 84px; flex: none; display: flex; background: #202124; border: 2px solid #626568; border-bottom: 0; border-radius: 19px 19px 0 0; border-right-width: 1px; }
.lights { display: flex; gap: 16px; padding: 29px 0 0 40px; width: 184px; }
.lights i { width: 24px; height: 24px; border-radius: 50%; }
.lights .red { background: #ed6a5e; }
.lights .yellow { background: #f5be4f; }
.lights .green { background: #62c554; }
.tab { width: 480px; height: 68px; margin-top: 14px; display: flex; align-items: center; padding-left: 24px; border-radius: 16px 16px 0 0; background: #35363a; color: #f3f3f4; font-size: 24px; position: relative; }
.tab::before, .tab::after { content: ""; position: absolute; bottom: 0; width: 16px; height: 16px; }
.tab::before { left: -16px; background: radial-gradient(circle at 0 0, transparent 15.500px, #35363a 16px); }
.tab::after { right: -16px; background: radial-gradient(circle at 100% 0, transparent 15.500px, #35363a 16px); }
.react { width: 32px; height: 32px; }
.mini { width: 26px; height: 26px; margin: 0 4px 0 14px; }
.x { width: 18px; height: 18px; margin-left: auto; margin-right: 23px; }
.plus { width: 26px; height: 26px; margin: 35px 0 0 30px; }

.toolbar { height: 72px; flex: none; display: flex; align-items: center; background: #35363a; border-left: 2px solid #55575b; padding-left: 26px; }
.nav { display: flex; gap: 32px; width: 252px; }
.nav svg { width: 32px; height: 32px; }
.omnibox { width: 2488px; height: 56px; border-radius: 28px; background: #202124; display: flex; align-items: center; padding-left: 27px; color: #f1f2f3; font-size: 28px; }
.lock { width: 18px; height: 22px; margin-right: 22px; }
.install { width: 28px; height: 28px; margin-left: auto; margin-right: 34px; }
.star { width: 32px; height: 32px; margin-right: 20px; }
.extensions { display: flex; gap: 32px; margin-left: 28px; width: 314px; }
.extensions svg { width: 32px; height: 32px; }
.avatar { width: 44px; height: 44px; border-radius: 50%; background: #b03c1d; color: #fff; font-size: 24px; line-height: 44px; text-align: center; margin-right: 14px; }
.update { width: 176px; height: 56px; border: 2.500px solid #ea8b80; border-radius: 28px; background: #392d30; color: #ea8b80; font-size: 26px; display: flex; align-items: center; padding-left: 24px; }
.update i { width: 6px; height: 6px; margin-left: 28px; border-radius: 50%; background: #ea8b80; box-shadow: 0 -10px #ea8b80, 0 10px #ea8b80; }

.bookmarks { height: 66px; flex: none; display: flex; align-items: center; background: #35363a; border-left: 2px solid #55575b; border-bottom: 2px solid #28292a; padding: 0 0 8px 26px; color: #f3f3f4; font-size: 24px; }
.bookmark { display: flex; align-items: center; flex: none; }
.bookmark svg { width: 32px; height: 32px; }
.more { width: 16px; height: 14px; margin: 0 21px 0 23px; }
.rule { width: 2px; height: 32px; background: #626366; margin-right: 21px; }
.list { width: 30px; height: 30px; margin-right: 17px; }

.page { flex: 1; position: relative; font-family: "Liberation Sans", Arial, sans-serif; color: #292f33; background: #fff; }
.page h1, .page h2, .page h3 { margin: 0; font-weight: 400; }
.site-header { height: 112px; display: flex; align-items: center; background: #252e3d; color: #fafafa; font-weight: 700; font-size: 32px; border-left: 2px solid #4c545f; padding-bottom: 2px; }
.site-header h1 { display: flex; align-items: center; width: 590px; padding-left: 15px; font-weight: 700; font-size: 72px; }
.site-header h1 svg { width: 70px; height: 72px; margin: -4px 1px 0 0; }
.orders { margin-right: 32px; }
.content { padding: 10px 0 0 480px; display: flex; flex-direction: column; align-items: flex-start; }
.content h2 { font-size: 64px; line-height: 80px; white-space: nowrap; }
.content h2.products { margin-top: 32px; }
.content h3 { font-size: 56px; line-height: 70px; white-space: nowrap; margin-top: 9px; }
.cart { position: absolute; top: 0; right: 0; width: 1008px; height: 324px; padding: 16px; background: #fafafa; border-bottom-left-radius: 16px; box-shadow: 0 6px 40px rgba(0, 0, 0, .45); clip-path: inset(0 0 -80px -80px); }
.close { position: absolute; top: 20px; right: 16px; font-size: 32px; line-height: 38px; color: #a4331f; }
.cart h2 { height: 110px; padding-top: 32px; border-bottom: 2px solid #292f3a; font-size: 48px; line-height: 60px; }
.cart h3 { margin-top: 31px; font-size: 56px; line-height: 70px; }
.cart h3 svg { display: inline-block; width: 52px; height: 54px; margin: 0 1px 0 3px; vertical-align: -7px; }

.shelf { height: 130px; flex: none; position: relative; display: flex; background: linear-gradient(#050506, #101012 30px, #26272b 100px, #303137); }
.behind { position: absolute; inset: 0; overflow: hidden; }
.sticker { position: absolute; left: -54px; top: 32px; width: 94px; height: 94px; border-radius: 50%; background: #427fb7; display: flex; align-items: center; justify-content: flex-end; }
.sticker span { width: 38px; height: 39px; margin-right: 7px; padding-right: 11px; text-align: right; background: #dde1e6; color: #3876a9; font: italic 700 22px/39px Lato, sans-serif; letter-spacing: -2px; }
.wallpaper { position: absolute; right: 0; top: 0; width: 80px; height: 130px; background: linear-gradient(#170c13, #40203a 30px, #7b4266 70px, #56487c 110px, #474a80); }
.dock { position: relative; margin: 4px 0 0 76px; width: 3208px; height: 116px; display: flex; align-items: flex-start; border: 2px solid #555457; border-radius: 30px; padding-left: 4px; background: radial-gradient(ellipse 180px 150px at 555px 100%, #604044, rgba(90, 60, 66, 0)), linear-gradient(#2f2f31, #333236); box-shadow: 0 0 90px rgba(0, 0, 0, .25), 0 0 2px #000; }
.group { display: flex; height: 112px; }
.group svg { flex: 1; min-width: 0; height: 112px; overflow: visible; }
.group-0 { width: 2262px; }
.group-1 { width: 566px; margin-left: 42px; position: relative; }
.group-1::before, .group-1::after { content: ""; position: absolute; top: 14px; width: 2px; height: 84px; background: #68676a; }
.group-1::before { left: -20px; }
.group-1::after { right: -24px; }
.extras { display: flex; margin-left: 58px; }
.doc { width: 62px; height: 74px; margin-top: 9px; }
.shot { width: 82px; height: 64px; margin: 28px 22px 0 23px; }
.trash { width: 62px; height: 80px; margin-top: 9px; }
</style>
